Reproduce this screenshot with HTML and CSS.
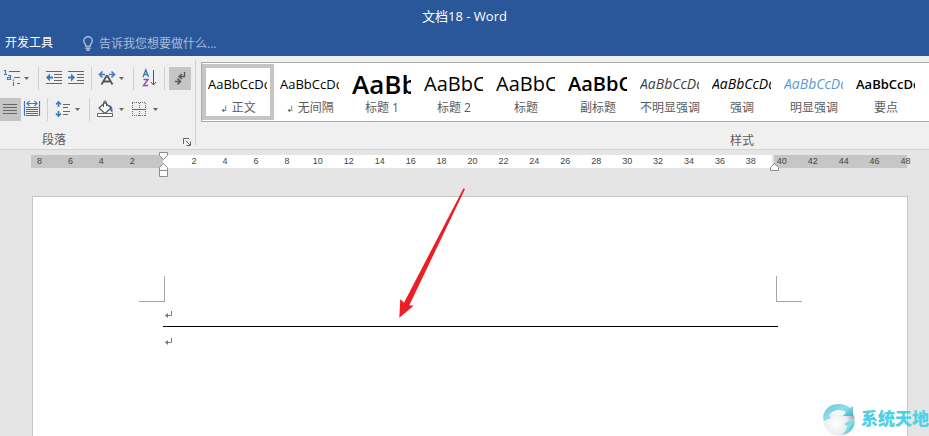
FILE: index.html
```html
<!DOCTYPE html>
<html lang="zh-CN">
<head>
<meta charset="utf-8">
<title>文档18 - Word</title>
<link rel="stylesheet" href="styles.css">
</head>
<body>
<div class="app">
  <header class="titlebar">
    <h1 class="doc-title">文档18 - Word</h1>
    <nav class="tabs">
      <a class="tab" href="#">开发工具</a>
      <label class="tell">
        <svg width="10" height="15" viewBox="0 0 10 15" fill="none" stroke="#a9bcd8" stroke-width="1.4"><path d="M3 10.500C3 8 .8 7.500.8 4.800a4.200 4.100 0 0 1 8.400 0C9.200 7.500 7 8 7 10.500zM2.500 12.500h5M3.500 14.200h3"/></svg>
        <input class="tell-input" type="text" aria-label="告诉我" placeholder="告诉我您想要做什么...">
      </label>
    </nav>
  </header>

  <section class="ribbon">
    <div class="group paragraph">
      <div class="tools">
        <div class="row">
          <button class="tool split" aria-label="多级列表"><svg width="38" height="23" viewBox="0 0 38 23" fill="none"><path d="M9 4.500h11M14 10.500h6M17 16.500h3" stroke="#666"/><path d="M4 3.500h1.500v4M4 7.500h3M8 8.500h2.500v4h-3v-2h3M13.500 12.500v1.500M13.500 15v4" stroke="#3f7cba" stroke-width="1.200"/><path d="M24 10h5l-2.500 3z" fill="#666"/></svg></button>
          <span class="sep"></span>
          <button class="tool mid" aria-label="减少缩进量"><svg width="26" height="23" viewBox="0 0 26 23" fill="none"><path d="M7 4.500h16M15 7.500h8M15 10.500h8M15 13.500h8M7 16.500h16" stroke="#666"/><path d="M14 10.500H8" stroke="#3f7cba" stroke-width="2"/><path d="M7 10.500l4-4v8z" fill="#3f7cba"/></svg></button>
          <button class="tool mid" aria-label="增加缩进量"><svg width="26" height="23" viewBox="0 0 26 23" fill="none"><path d="M3 4.500h16M12 7.500h7M12 10.500h7M12 13.500h7M3 16.500h16" stroke="#666"/><path d="M3 10.500h6" stroke="#3f7cba" stroke-width="2"/><path d="M10 10.500l-4-4v8z" fill="#3f7cba"/></svg></button>
          <span class="sep"></span>
          <button class="tool wide" aria-label="中文版式"><svg width="41" height="23" viewBox="0 0 41 23" fill="none"><path d="M9.500 17.500L14.500 9h1l5 8.500M12 14.500h6" stroke="#555" stroke-width="1.800"/><path d="M8 7.500h5M17 7.500h5M10.500 4.500l-3 3 3 3M19.500 4.500l3 3-3 3" stroke="#3f7cba" stroke-width="1.600"/><path d="M27 10h5l-2.500 3z" fill="#666"/></svg></button>
          <span class="sep"></span>
          <button class="tool sort" aria-label="排序"><svg width="30" height="23" viewBox="0 0 30 23" fill="none"><path d="M9 10l2.800-7 2.800 7M10 7.500h4" stroke="#3f7cba" stroke-width="1.400"/><path d="M9.500 12.500h4.500l-4.500 6H14" stroke="#8a4fb0" stroke-width="1.400"/><path d="M19.500 3v15M17 15l2.500 3 2.500-3" stroke="#555"/></svg></button>
          <span class="sep"></span>
          <button class="tool square pressed shifted" aria-label="显示编辑标记"><svg width="22" height="23" viewBox="0 0 22 23" fill="none" stroke="#555"><path d="M15.500 5v4.500H10M13 7l-3 2.500 3 2.500" stroke-width="1.300"/><path d="M6 14.500h5M8.500 11.500l3 3-3 3" stroke-width="1.500"/></svg></button>
        </div>
        <div class="row">
          <button class="tool square pressed" aria-label="两端对齐"><svg width="21" height="23" viewBox="0 0 21 23" stroke="#666"><path d="M3 6.500h14M3 9.500h14M3 12.500h14M3 15.500h14"/></svg></button>
          <button class="tool mid" aria-label="分散对齐"><svg width="26" height="23" viewBox="0 0 26 23" fill="none"><path d="M5 9.500h12M5 11.500h12M5 13.500h12M5 15.500h12M5 17.500h12" stroke="#666"/><path d="M3.500 3v15M18.500 3v15M6 5.500h10M8.500 3L6 5.500 8.500 8M13.500 3L16 5.500 13.500 8" stroke="#3f7cba" stroke-width="1.200"/></svg></button>
          <span class="sep"></span>
          <button class="tool wide" aria-label="行和段落间距"><svg width="41" height="23" viewBox="0 0 41 23" fill="none"><path d="M15 6.500h7M15 9.500h5M15 13.500h7M15 16.500h5" stroke="#666"/><path d="M10.500 4v5M10.500 13v5M8 6.500L10.500 4 13 6.500M8 15.500l2.500 2.500 2.500-2.500" stroke="#3f7cba" stroke-width="1.700"/><path d="M27 10h5l-2.500 3z" fill="#666"/></svg></button>
          <span class="sep"></span>
          <button class="tool split" aria-label="底纹"><svg width="38" height="23" viewBox="0 0 38 23" fill="none"><path d="M18 7c4 0 5 3 4.500 8L19 11z" fill="#3f7cba"/><path d="M9 10l6-5.500 6 5.500-6 5.500z" fill="#fff" stroke="#555" stroke-width="1.200"/><path d="M13.500 9V4.500a1.500 1.500 0 0 1 3 0V8" stroke="#555"/><path d="M7.500 15.500h15v3h-15z" fill="#fff" stroke="#666"/><path d="M29 10h5l-2.500 3z" fill="#666"/></svg></button>
          <button class="tool split" aria-label="边框"><svg width="38" height="23" viewBox="0 0 38 23" fill="none" stroke="#666"><path d="M4 4.500h14M4 17.500h14M4.500 5v13M17.500 5v13M11.500 5v13" stroke-dasharray="1 1"/><path d="M4 11.500h14"/><path d="M25 10h5l-2.500 3z" fill="#666" stroke="none"/></svg></button>
        </div>
      </div>
      <div class="group-foot">
        <span class="group-name">段落</span>
        <button class="launcher" aria-label="段落设置"><svg width="8" height="8" viewBox="0 0 8 8" fill="none" stroke="#666"><path d="M.5 6V.500H6M3 3l4 4M7.500 3.500v4h-4"/></svg></button>
      </div>
    </div>

    <div class="group styles">
      <div class="gallery">
        <button class="style selected"><span class="sample">AaBbCcDd</span><span class="name"><i class="pilcrow">↲</i>正文</span></button>
        <button class="style"><span class="sample">AaBbCcDd</span><span class="name"><i class="pilcrow">↲</i>无间隔</span></button>
        <button class="style"><span class="sample huge">AaBb</span><span class="name">标题 1</span></button>
        <button class="style"><span class="sample large">AaBbC</span><span class="name">标题 2</span></button>
        <button class="style"><span class="sample large">AaBbC</span><span class="name">标题</span></button>
        <button class="style"><span class="sample large bold">AaBbC</span><span class="name">副标题</span></button>
        <button class="style"><span class="sample italic soft">AaBbCcDd</span><span class="name">不明显强调</span></button>
        <button class="style"><span class="sample italic">AaBbCcDd</span><span class="name">强调</span></button>
        <button class="style"><span class="sample italic blue">AaBbCcDd</span><span class="name">明显强调</span></button>
        <button class="style"><span class="sample strong">AaBbCcDd</span><span class="name">要点</span></button>
      </div>
      <div class="group-foot centered"><span class="group-name">样式</span></div>
    </div>
  </section>

  <main class="workspace">
    <div class="ruler">
      <div class="scale">
        <span>8</span><span>6</span><span>4</span><span>2</span><span></span><span>2</span><span>4</span><span>6</span><span>8</span><span>10</span><span>12</span><span>14</span><span>16</span><span>18</span><span>20</span><span>22</span><span>24</span><span>26</span><span>28</span><span>30</span><span>32</span><span>34</span><span>36</span><span>38</span><span>40</span><span>42</span><span>44</span><span>46</span><span>48</span>
      </div>
      <svg class="marker start" width="9" height="25" viewBox="0 0 9 25" fill="#fff" stroke="#8c8c8c"><path d="M.5.500h8v3l-4 4-4-4zM.5 18.500v-3l4-4 4 4v3zM.5 18.500h8v6h-8z"/></svg>
      <svg class="marker end" width="9" height="8" viewBox="0 0 9 8" fill="#fff" stroke="#8c8c8c"><path d="M.5 7.500v-3l4-4 4 4v3z"/></svg>
    </div>
    <article class="page">
      <div class="corners"><span class="corner left"></span><span class="corner right"></span></div>
      <div class="text">
        <p class="para"><svg width="9" height="9" viewBox="0 0 9 9" fill="none" stroke="#7c7c7c"><path d="M7.500 0v4.500H1"/><path d="M1 4.500L4 2v5z" fill="#7c7c7c" stroke="none"/></svg></p>
        <hr class="rule">
        <p class="para last"><svg width="9" height="9" viewBox="0 0 9 9" fill="none" stroke="#7c7c7c"><path d="M7.500 0v4.500H1"/><path d="M1 4.500L4 2v5z" fill="#7c7c7c" stroke="none"/></svg></p>
      </div>
    </article>
    <svg class="arrow" width="68" height="132" viewBox="0 0 68 132"><path d="M1.300 130.700L2.300 112 6 115.700 65.500 1.200 67 2 11.300 118.300l4.200.4z" fill="#ee1c25"/></svg>
    <div class="brand">
      <svg width="36" height="34" viewBox="0 0 36 34">
        <defs>
          <radialGradient id="ball" cx=".4" cy=".6" r=".6"><stop offset="0" stop-color="#fff"/><stop offset=".6" stop-color="#eceeef"/><stop offset="1" stop-color="#a4abb0"/></radialGradient>
          <linearGradient id="sea" x1="0" y1="0" x2="1" y2="1"><stop offset="0" stop-color="#6fc3d2"/><stop offset=".5" stop-color="#8be0ec"/><stop offset="1" stop-color="#2797ae"/></linearGradient>
        </defs>
        <circle cx="18" cy="18" r="15.500" fill="url(#ball)"/>
        <path d="M2 14C4 6 10 2 17 2c5 0 9 1 12 4l3-2v10H21l4-4C18 7 11 9 8 13l2 3-7 3z" fill="url(#sea)"/>
        <path d="M23 22l10-6c2 8-2 15-12 17 3-3 5-6 5-9z" fill="url(#sea)"/>
        <path d="M9 12c5-5 11-5 16-2l-3 4c-4-2-8-3-13-2z" fill="#eefafc"/>
      </svg>
      <span>系统天地</span>
    </div>
  </main>
</div>
</body>
</html>
```
FILE: styles.css
```css
* { box-sizing: border-box; }
body {
  margin: 0;
  font: 12px/16px "Open Sans", "Noto Sans CJK SC", sans-serif;
  color: #5c5c5c;
}
button, input {
  margin: 0;
  padding: 0;
  border: 0;
  background: none;
  font: inherit;
  color: inherit;
}
svg { display: block; flex: none; }
.app {
  display: flex;
  flex-direction: column;
  min-height: 100vh;
  overflow: hidden;
}

.titlebar { background: #2a579a; color: #fff; height: 56px; }
.doc-title {
  margin: 0;
  padding-top: 8px;
  font-size: 13px;
  font-weight: 400;
  line-height: 16px;
  text-align: center;
}
.tabs { display: flex; align-items: center; padding: 10px 5px 0; gap: 30px; }
.tab { color: #fff; text-decoration: none; }
.tell { display: flex; align-items: center; gap: 6px; }
.tell-input { width: 160px; height: 18px; }
.tell-input::placeholder { color: #a9bcd8; opacity: 1; }

.ribbon {
  display: flex;
  height: 94px;
  background: #f0f0f0;
  border-bottom: 1px solid #d4d4d4;
  overflow: hidden;
}
.group { display: flex; flex-direction: column; flex: none; }
.paragraph {
  width: 196px;
  padding-top: 11px;
  position: relative;
}
.paragraph::after {
  content: "";
  position: absolute;
  top: 4px;
  bottom: 4px;
  right: 0;
  width: 1px;
  background: #d0d0d0;
}
.tools { display: grid; gap: 8px; }
.row { display: flex; height: 23px; }
.sep { width: 1px; background: #d0d0d0; }
.tool { height: 23px; flex: none; }
.split { width: 38px; }
.mid { width: 26px; }
.wide { width: 41px; }
.sort { width: 30px; }
.square { width: 21px; }
.shifted { width: 22px; margin-left: 4px; }
.pressed { background: #c5c5c5; }
.group-foot {
  display: flex;
  justify-content: space-between;
  align-items: center;
  padding: 11px 5px 0 42px;
}
.group-foot.centered { justify-content: center; padding: 11px 0 0; }
.launcher { padding-top: 3px; }

.styles { width: 1092px; padding-top: 6px; }
.gallery {
  display: flex;
  height: 60px;
  margin: 0 5px;
  padding-top: 1px;
  background: #fff;
  border: 1px solid #ababab;
}
.style {
  display: flex;
  flex-direction: column;
  justify-content: space-between;
  flex: none;
  width: 72px;
  height: 56px;
  padding: 2px 2px 0;
  border: 4px solid transparent;
}
.selected { border-color: #c5c5c5; }
.sample {
  width: 59px;
  height: 28px;
  overflow: hidden;
  font-size: 13px;
  line-height: 28px;
  text-align: left;
  white-space: nowrap;
  color: #000;
}
.large { font-size: 20px; }
.huge { font-size: 26px; font-weight: 600; }
.bold { font-weight: 600; }
.strong { font-weight: 600; }
.italic { font-size: 14px; font-style: italic; }
.soft { color: #404040; }
.blue { color: #5b9bd5; }
.name { align-self: center; white-space: nowrap; }
.pilcrow { font: 9px/9px "DejaVu Sans", sans-serif; margin-right: 4px; }

.workspace {
  position: relative;
  display: flex;
  flex-direction: column;
  flex: 1;
  padding: 5px 21px 0 31px;
  background: #e5e5e5;
}
.ruler {
  position: relative;
  height: 13px;
  margin-right: 1px;
  background: linear-gradient(to right, #c6c6c6 132px, #fff 132px, #fff calc(100% - 135px), #e5e5e5 calc(100% - 135px), #e5e5e5 calc(100% - 133px), #c6c6c6 calc(100% - 133px));
}
.scale {
  display: grid;
  grid-template-columns: repeat(29, 1fr);
  margin: 0 -14px 0 -7px;
  font: 9px/13px "Liberation Sans", sans-serif;
  color: #444;
  text-align: center;
}
.marker { position: absolute; }
.start { left: 128px; top: -3px; }
.end { right: 128px; top: 8px; }
.page {
  flex: 1;
  margin: 28px 0 0 1px;
  padding-top: 79px;
  background: #fff;
  border: 1px solid #c6c6c6;
  border-bottom: 0;
}
.corners { display: flex; justify-content: space-between; padding: 0 105px 0 106px; }
.corner { width: 26px; height: 26px; border-bottom: 1px solid #a6a6a6; }
.corner.left { border-right: 1px solid #a6a6a6; }
.corner.right { border-left: 1px solid #a6a6a6; }
.text { padding: 0 129px 0 130px; }
.para { margin: 0; padding: 9px 0 0 1px; height: 24px; }
.last { padding-top: 11px; }
.rule { margin: 0; border: 0; height: 1px; background: #000; }
.arrow { position: absolute; left: 398px; top: 37px; }
.brand {
  position: absolute;
  right: 0;
  bottom: 0;
  display: flex;
  align-items: center;
  gap: 4px;
  font-size: 17px;
  font-weight: 900;
  line-height: 34px;
  color: #4fd0e6;
}
```
